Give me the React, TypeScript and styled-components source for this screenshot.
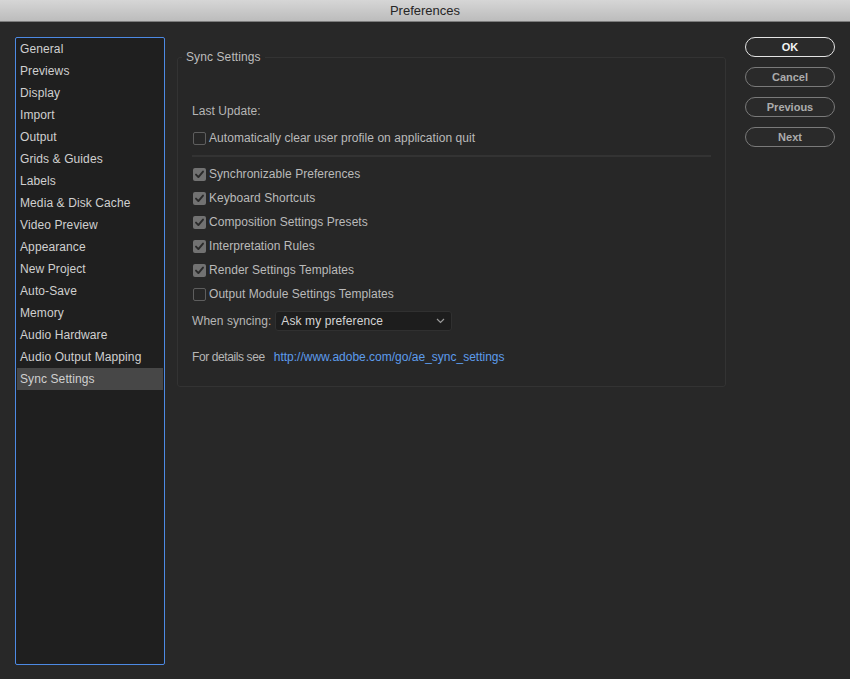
import styled, { createGlobalStyle } from "styled-components";

const GlobalStyle = createGlobalStyle`
  html, body {
    margin: 0;
    padding: 0;
    background: #282828;
  }
  body {
    font-family: "Liberation Sans", Arial, sans-serif;
    -webkit-font-smoothing: antialiased;
  }
`;

const categories = [
  "General",
  "Previews",
  "Display",
  "Import",
  "Output",
  "Grids & Guides",
  "Labels",
  "Media & Disk Cache",
  "Video Preview",
  "Appearance",
  "New Project",
  "Auto-Save",
  "Memory",
  "Audio Hardware",
  "Audio Output Mapping",
  "Sync Settings",
];

const syncItems = [
  { label: "Synchronizable Preferences", checked: true },
  { label: "Keyboard Shortcuts", checked: true },
  { label: "Composition Settings Presets", checked: true },
  { label: "Interpretation Rules", checked: true },
  { label: "Render Settings Templates", checked: true },
  { label: "Output Module Settings Templates", checked: false },
];

function CheckRow({ label, checked }: { label: string; checked: boolean }) {
  return (
    <Row>
      <Box checked={checked}>
        {checked && (
          <svg width="11" height="11" viewBox="0 0 11 11">
            <path
              d="M2 5.6 L4.4 8.1 L9 2.6"
              fill="none"
              stroke="#2a2a2a"
              strokeWidth="1.9"
              strokeLinecap="round"
              strokeLinejoin="round"
            />
          </svg>
        )}
      </Box>
      <Label>{label}</Label>
    </Row>
  );
}

function App() {
  return (
    <>
      <GlobalStyle />
      <Window>
        <TitleBar>Preferences</TitleBar>
        <Body>
          <Sidebar>
            {categories.map((name) => (
              <NavItem key={name} active={name === "Sync Settings"}>
                {name}
              </NavItem>
            ))}
          </Sidebar>
          <Main>
            <Group>
              <Legend>Sync Settings</Legend>
              <Text>Last Update:</Text>
              <FirstRow>
                <CheckRow
                  label="Automatically clear user profile on application quit"
                  checked={false}
                />
              </FirstRow>
              <Divider />
              <List>
                {syncItems.map((item) => (
                  <CheckRow key={item.label} {...item} />
                ))}
              </List>
              <SelectRow>
                <Text>When syncing:</Text>
                <Select>
                  <span>Ask my preference</span>
                  <svg width="9" height="6" viewBox="0 0 9 6">
                    <path
                      d="M1 1 L4.5 4.5 L8 1"
                      fill="none"
                      stroke="#9a9a9a"
                      strokeWidth="1.2"
                    />
                  </svg>
                </Select>
              </SelectRow>
              <LinkRow>
                <DetailsText>For details see</DetailsText>
                <Link>http://www.adobe.com/go/ae_sync_settings</Link>
              </LinkRow>
            </Group>
          </Main>
          <Buttons>
            <Button primary>OK</Button>
            <Button>Cancel</Button>
            <Button>Previous</Button>
            <Button>Next</Button>
          </Buttons>
        </Body>
      </Window>
    </>
  );
}

const Window = styled.div`
  width: 850px;
  height: 679px;
  display: flex;
  flex-direction: column;
  background: #282828;
  overflow: hidden;
`;

const TitleBar = styled.div`
  height: 22px;
  flex: none;
  box-sizing: border-box;
  display: flex;
  align-items: center;
  justify-content: center;
  background: linear-gradient(#d6d6d6, #bcbcbc);
  border-bottom: 1px solid #7c7c7c;
  color: #262626;
  font-size: 13px;
`;

const Body = styled.div`
  flex: 1;
  display: flex;
  padding: 15px 15px 14px 15px;
  min-height: 0;
`;

const Sidebar = styled.div`
  width: 150px;
  box-sizing: border-box;
  border: 1px solid #4d8ae4;
  border-radius: 2px;
  background: #1f1f1f;
  padding: 0 1px;
  display: flex;
  flex-direction: column;
`;

const NavItem = styled.div<{ active?: boolean }>`
  height: 22px;
  line-height: 23px;
  padding-left: 3px;
  font-size: 12px;
  letter-spacing: 0.1px;
  color: #d0d0d0;
  background: ${(p) => (p.active ? "#474747" : "transparent")};
  white-space: nowrap;
`;

const Main = styled.div`
  width: 549px;
  margin-left: 12px;
  flex: none;
`;

const Group = styled.fieldset`
  margin: 13px 0 0 0;
  padding: 0 14px 21px 14px;
  border: 1px solid #333333;
  border-radius: 3px;
  background: #272727;
  min-width: 0;
  height: 337px;
  box-sizing: border-box;
`;

const Legend = styled.legend`
  margin-left: -10px;
  padding: 0 4px;
  font-size: 12px;
  line-height: 14px;
  color: #bcbcbc;
  letter-spacing: 0.1px;
`;

const Text = styled.div`
  font-size: 12px;
  line-height: 16px;
  color: #b6b6b6;
  letter-spacing: 0.05px;
  margin-top: 39px;
  white-space: nowrap;
`;

const DetailsText = styled(Text)`
  letter-spacing: -0.4px;
`;

const FirstRow = styled.div`
  margin-top: 7px;
`;

const Row = styled.div`
  height: 24px;
  display: flex;
  align-items: center;
`;

const Box = styled.div<{ checked: boolean }>`
  width: 13px;
  height: 13px;
  box-sizing: border-box;
  margin-left: 1px;
  margin-right: 3px;
  border-radius: 2px;
  display: flex;
  align-items: center;
  justify-content: center;
  background: ${(p) => (p.checked ? "#727272" : "transparent")};
  border: ${(p) => (p.checked ? "none" : "1.5px solid #5e5e5e")};
`;

const Label = styled.span`
  font-size: 12px;
  color: #bababa;
  letter-spacing: 0.05px;
  white-space: nowrap;
`;

const Divider = styled.div`
  height: 2px;
  background: #333333;
  margin-top: 5px;
`;

const List = styled.div`
  margin-top: 5px;
`;

const SelectRow = styled.div`
  display: flex;
  align-items: center;
  margin-top: 5px;
  gap: 4px;

  ${Text} {
    margin-top: 0;
  }
`;

const Select = styled.div`
  width: 177px;
  height: 20px;
  box-sizing: border-box;
  background: #1d1d1d;
  border: 1px solid #303030;
  border-radius: 3px;
  display: flex;
  align-items: center;
  justify-content: space-between;
  padding: 0 6px 0 5px;
  font-size: 12px;
  color: #d4d4d4;
  letter-spacing: 0.1px;
`;

const LinkRow = styled.div`
  display: flex;
  align-items: center;
  margin-top: 18px;
  gap: 9px;

  ${Text} {
    margin-top: 0;
  }
`;

const Link = styled.a`
  font-size: 12px;
  line-height: 16px;
  color: #5d9cec;
  text-decoration: none;
`;

const Buttons = styled.div`
  margin-left: 19px;
  display: flex;
  flex-direction: column;
  gap: 10px;
`;

const Button = styled.button<{ primary?: boolean }>`
  width: 90px;
  height: 20px;
  box-sizing: border-box;
  border-radius: 10px;
  background: #2a2a2a;
  border: 1.5px solid ${(p) => (p.primary ? "#e4e4e4" : "#7a7a7a")};
  color: ${(p) => (p.primary ? "#f4f4f4" : "#acacac")};
  font-family: "Liberation Sans", Arial, sans-serif;
  font-size: 11px;
  font-weight: bold;
  padding: 0;
  cursor: pointer;
`;

export default App;
